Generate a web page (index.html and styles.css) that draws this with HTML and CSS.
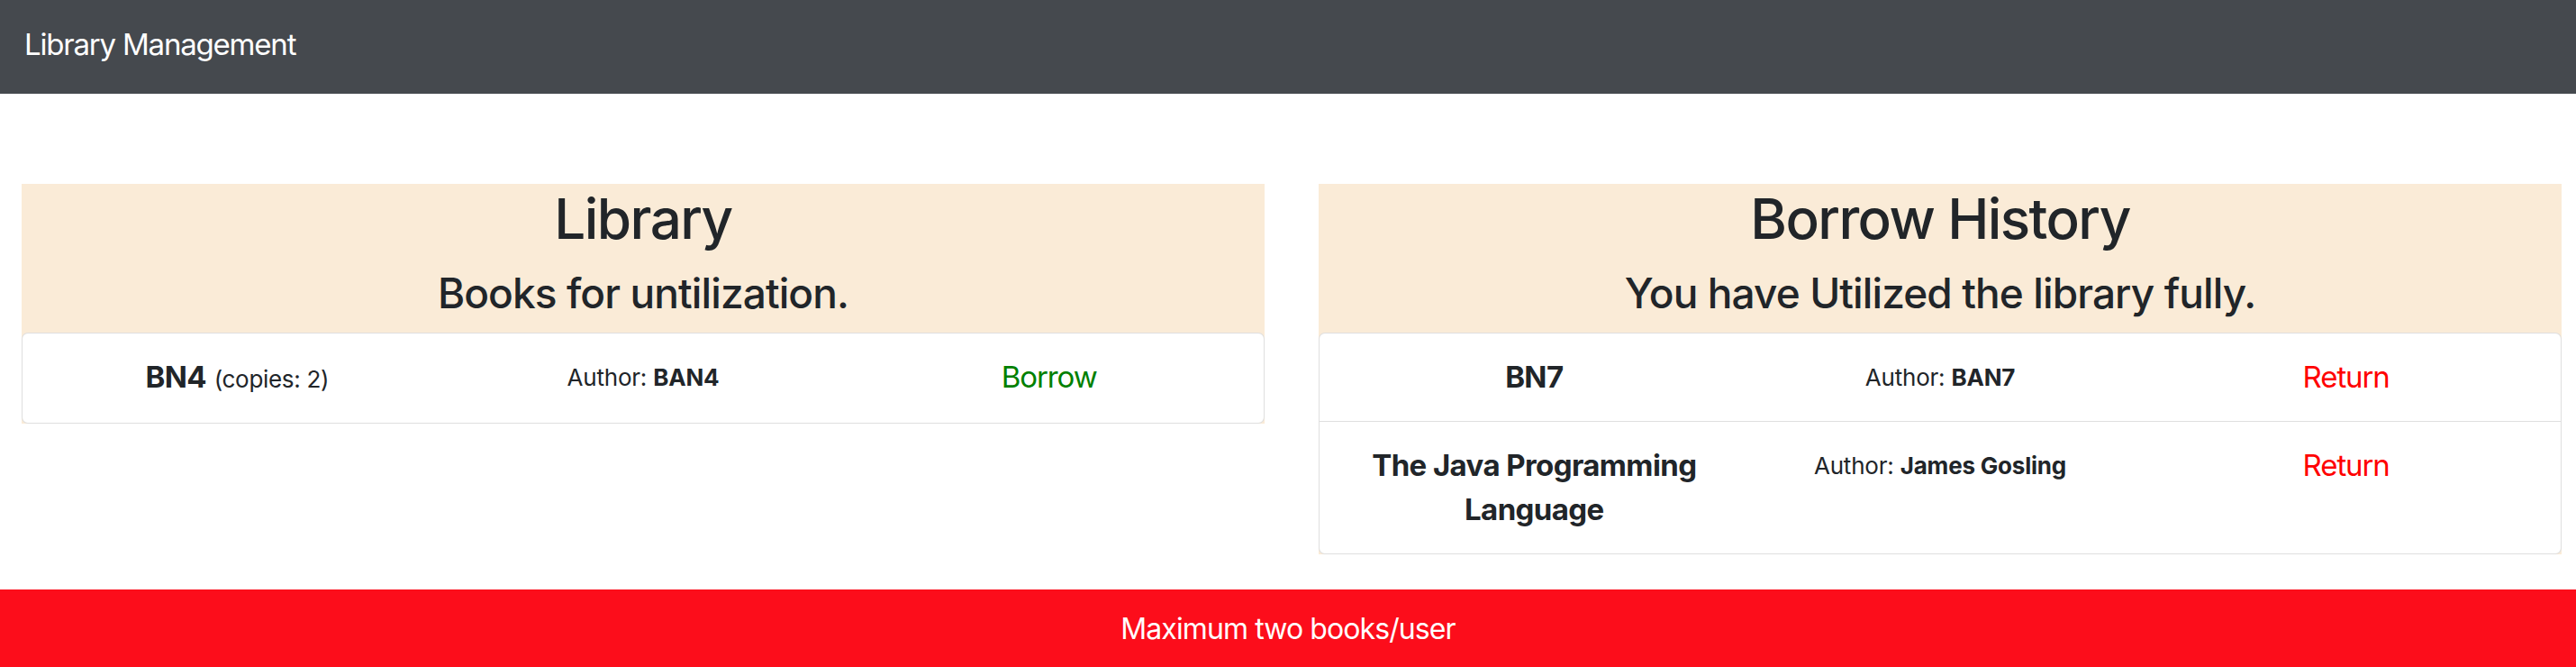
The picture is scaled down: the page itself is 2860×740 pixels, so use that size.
FILE: index.html
```html
<!DOCTYPE html>
<html lang="en">
<head>
<meta charset="utf-8">
<title>Library Management</title>
<link rel="stylesheet" href="styles.css">
</head>
<body>
<div class="page">
  <nav class="navbar">
    <span class="brand">Library Management</span>
  </nav>
  <main class="main">
    <section class="panel">
      <header class="panel-head">
        <h1 class="panel-title">Library</h1>
        <h3 class="panel-sub">Books for untilization.</h3>
      </header>
      <ul class="list">
        <li class="item">
          <div class="cell"><span class="book">BN4</span> <small class="copies">(copies: 2)</small></div>
          <div class="cell author">Author: <b>BAN4</b></div>
          <div class="cell"><span class="action borrow">Borrow</span></div>
        </li>
      </ul>
    </section>
    <section class="panel">
      <header class="panel-head">
        <h1 class="panel-title">Borrow History</h1>
        <h3 class="panel-sub">You have Utilized the library fully.</h3>
      </header>
      <ul class="list">
        <li class="item">
          <div class="cell"><span class="book">BN7</span></div>
          <div class="cell author">Author: <b>BAN7</b></div>
          <div class="cell"><span class="action return">Return</span></div>
        </li>
        <li class="item">
          <div class="cell"><span class="book">The Java Programming Language</span></div>
          <div class="cell author">Author: <b>James Gosling</b></div>
          <div class="cell"><span class="action return">Return</span></div>
        </li>
      </ul>
    </section>
  </main>
  <footer class="footer">Maximum two books/user</footer>
</div>
</body>
</html>
```

FILE: styles.css
```css
* { box-sizing: border-box; }
html, body { margin: 0; padding: 0; }
body {
  font-family: Inter, "Noto Sans", "Liberation Sans", sans-serif;
  color: #212529;
  background: #fff;
}
.page {
  display: flex;
  flex-direction: column;
  min-height: 100vh;
}
.navbar {
  height: 104px;
  background: #45494e;
  display: flex;
  align-items: center;
  padding: 0 27px;
}
.brand {
  color: #fff;
  font-size: 33px;
  letter-spacing: -1.2px;
  line-height: 1;
  position: relative;
  top: -3px;
}
.main {
  display: flex;
  gap: 60px;
  padding: 100px 16px 0 24px;
  align-items: flex-start;
}
.panel {
  flex: 1 1 0;
  min-width: 0;
  background: #faebd7;
}
.panel-head {
  text-align: center;
  padding: 2px 0 15px;
}
.panel-title {
  margin: 0 0 18px;
  font-size: 62px;
  font-weight: 500;
  letter-spacing: -1.6px;
  line-height: 1.2;
}
.panel-sub {
  margin: 0;
  font-size: 46px;
  font-weight: 500;
  letter-spacing: -0.9px;
  line-height: 1.2;
}
.list {
  list-style: none;
  margin: 0;
  padding: 0;
  background: #fff;
  border: 1px solid rgba(0,0,0,.125);
  border-radius: 7px;
}
.item {
  display: flex;
  padding: 24px 13px;
  border-top: 1px solid rgba(0,0,0,.125);
}
.item:first-child { border-top: 0; }
.cell {
  flex: 1 1 0;
  text-align: center;
  font-size: 33px;
  line-height: 49px;
  letter-spacing: -0.6px;
}
.book { font-weight: 700; }
.copies { font-size: 26px; letter-spacing: -0.3px; }
.author { font-size: 26px; letter-spacing: -0.2px; }
.author b { font-weight: 700; }
.action { font-size: 33px; letter-spacing: -1.1px; }
.borrow { color: #008000; }
.return { color: #ff0000; }
.footer {
  margin-top: auto;
  height: 86px;
  background: #fc0d1b;
  color: #fff;
  font-size: 32px;
  letter-spacing: -0.9px;
  display: flex;
  align-items: center;
  justify-content: center;
}
```
